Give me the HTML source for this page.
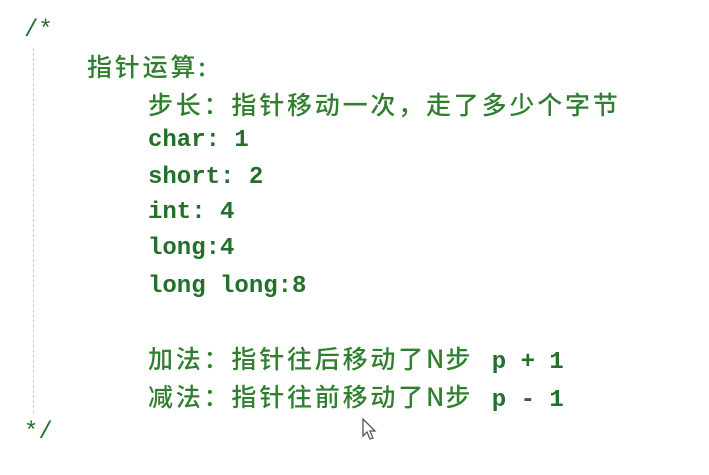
<!DOCTYPE html>
<html><head><meta charset="utf-8"><style>
body{margin:0;width:709px;height:475px;background:#fff;overflow:hidden;position:relative;font-family:"Liberation Mono","Noto Sans CJK SC",monospace;color:#2b7d2b}
.l{position:absolute;white-space:pre;font-size:24px;line-height:30px}
.c{font-family:"Noto Sans CJK SC",sans-serif;letter-spacing:2.8px;font-size:25px;font-weight:500;color:#2f7f2f}
.m{font-family:"Liberation Mono",monospace;font-weight:bold;color:#22702a}
.dash{position:absolute;left:33px;top:48px;height:365px;border-left:1px dashed #c8c8c8}
</style></head><body>
<div class="dash"></div>
<div class="l m" style="left:24px;top:16px;font-weight:normal">/*</div>
<div class="l c" style="left:87px;top:51px">指针运算:</div>
<div class="l c" style="left:148px;top:89px">步长：指针移动一次，走了多少个字节</div>
<div class="l m" style="left:148px;top:126px">char: 1</div>
<div class="l m" style="left:148px;top:163px">short: 2</div>
<div class="l m" style="left:148px;top:198px">int: 4</div>
<div class="l m" style="left:148px;top:234px">long:4</div>
<div class="l m" style="left:148px;top:272px">long long:8</div>
<div class="l" style="left:148px;top:343px"><span class="c">加法：指针往后移动了</span><span class="c" style="letter-spacing:1px">N步</span><span class="m" style="margin-left:6px"> p + 1</span></div>
<div class="l" style="left:148px;top:381px"><span class="c">减法：指针往前移动了</span><span class="c" style="letter-spacing:1px">N步</span><span class="m" style="margin-left:6px"> p - 1</span></div>
<div class="l m" style="left:24px;top:418px;font-weight:normal">*/</div>
<svg style="position:absolute;left:362px;top:418px" width="16" height="24" viewBox="0 0 16 24"><path d="M1 1 L1 18 L5 14 L8 21 L11 20 L8 13 L13 13 Z" fill="#fff" stroke="#555" stroke-width="1.3"/></svg>
</body></html>
